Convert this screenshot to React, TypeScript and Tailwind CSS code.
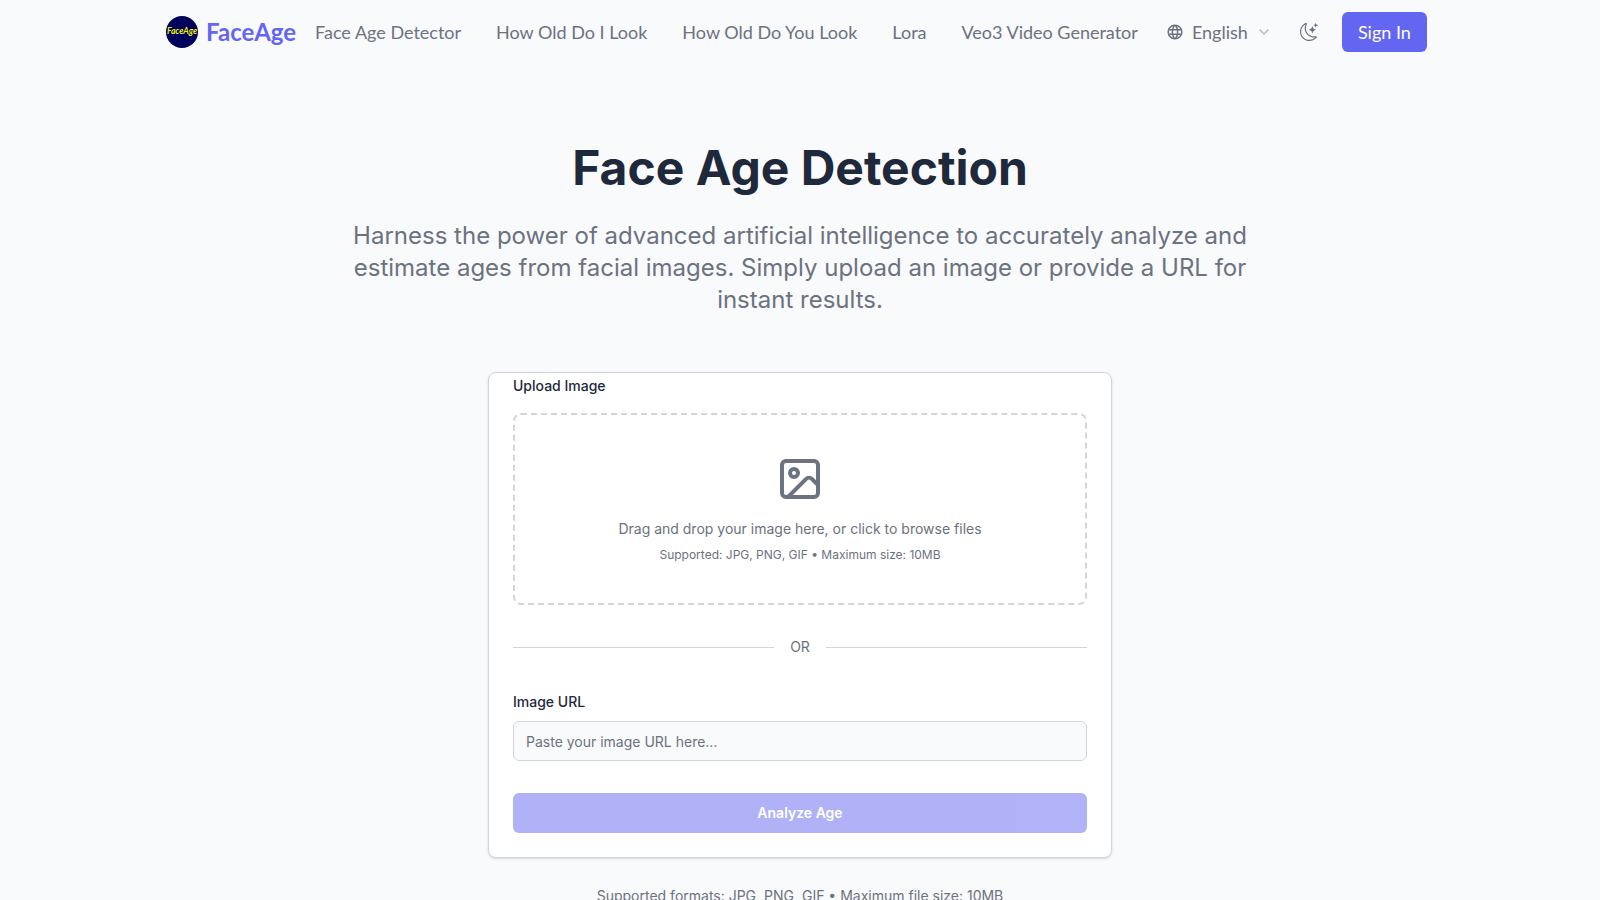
import { useState } from "react";
import { ChevronDown, Image } from "lucide-react";
import { BsMoonStars } from "react-icons/bs";
import { MdLanguage } from "react-icons/md";

interface NavItem {
  title: string;
  url: string;
}

const navItems: NavItem[] = [
  { title: "Face Age Detector", url: "#detector" },
  { title: "How Old Do I Look", url: "#how-old-do-i-look" },
  { title: "How Old Do You Look", url: "#how-old-do-you-look" },
  { title: "Lora", url: "#lora" },
  { title: "Veo3 Video Generator", url: "#veo3" },
];

function Logo() {
  return (
    <svg viewBox="0 0 32 32" className="size-8 shrink-0" aria-hidden="true">
      <circle cx="16" cy="16" r="16" fill="#00005a" />
      <text
        x="16"
        y="18"
        textAnchor="middle"
        fontFamily="Lato, sans-serif"
        fontSize="8.5"
        fontWeight="700"
        fontStyle="italic"
        fill="#f5f500"
      >
        FaceAge
      </text>
    </svg>
  );
}

function Header() {
  return (
    <header className="font-[Lato,sans-serif] text-[#6b7280]">
      <div className="mx-auto flex h-16 max-w-[1268px] items-center">
        <a href="#home" className="flex items-center gap-2">
          <Logo />
          <span className="text-2xl font-bold text-[#6366f1]">FaceAge</span>
        </a>
        <nav className="ml-[19px] flex items-center gap-[35px] whitespace-nowrap text-lg">
          {navItems.map((item) => (
            <a key={item.url} href={item.url} className="hover:text-[#6366f1]">
              {item.title}
            </a>
          ))}
        </nav>
        <div className="ml-7 flex items-center">
          <div className="relative flex items-center gap-2 text-lg">
            <MdLanguage className="size-[18px]" />
            <select aria-label="Language" defaultValue="en" className="appearance-none bg-transparent pr-6">
              <option value="en">English</option>
            </select>
            <ChevronDown className="pointer-events-none absolute right-0 size-4 opacity-50" />
          </div>
          <button type="button" aria-label="Toggle theme" className="ml-7">
            <BsMoonStars className="size-[18px]" />
          </button>
          <button
            type="button"
            className="ml-6 h-10 whitespace-nowrap rounded-md bg-[#6366f1] px-4 text-lg text-white"
          >
            Sign In
          </button>
        </div>
      </div>
    </header>
  );
}

function UploadCard() {
  const [url, setUrl] = useState("");

  return (
    <form className="rounded-lg border border-[#d1d5db] bg-white px-6 pb-6 text-sm shadow-sm">
      <div className="text-base">
        <label htmlFor="file" className="text-sm font-medium">
          Upload Image
        </label>
      </div>
      <label
        htmlFor="file"
        className="mt-4 flex h-48 cursor-pointer flex-col items-center justify-center rounded-lg border-2 border-dashed border-gray-300 text-[#6b7280]"
      >
        <Image className="size-12" />
        <span className="mt-4">Drag and drop your image here, or click to browse files</span>
        <span className="mt-2 text-xs">Supported: JPG, PNG, GIF • Maximum size: 10MB</span>
        <input id="file" type="file" accept="image/*" className="sr-only" />
      </label>

      <div className="my-8 flex items-center gap-4 text-[#6b7280]">
        <div className="h-px flex-1 bg-[#d1d5db]" />
        <span>OR</span>
        <div className="h-px flex-1 bg-[#d1d5db]" />
      </div>

      <div className="text-base">
        <label htmlFor="url" className="text-sm font-medium">
          Image URL
        </label>
      </div>
      <input
        id="url"
        type="url"
        value={url}
        onChange={(e) => setUrl(e.target.value)}
        placeholder="Paste your image URL here..."
        className="mt-2 block h-10 w-full rounded-md border border-[#d1d5db] bg-[#f9fafb] px-3 placeholder:text-[#6b7280]"
      />

      <button
        type="submit"
        disabled={!url}
        className="mt-8 h-10 w-full rounded-md bg-[#6366f1] font-semibold text-white disabled:opacity-50"
      >
        Analyze Age
      </button>
    </form>
  );
}

export default function App() {
  return (
    <div className="min-h-screen bg-[#f9fafb] font-[Inter,sans-serif] text-[#1e293b]">
      <Header />
      <main className="pb-16 pt-20">
        <div className="mx-auto max-w-4xl text-center">
          <h1 className="text-5xl font-bold">Face Age Detection</h1>
          <p className="mt-7 text-2xl text-[#6b7280]">
            Harness the power of advanced artificial intelligence to accurately analyze and estimate ages from facial
            images. Simply upload an image or provide a URL for instant results.
          </p>
        </div>
        <div className="mx-auto mt-14 max-w-2xl px-6">
          <UploadCard />
          <p className="mt-7 text-center text-sm text-[#6b7280]">
            Supported formats: JPG, PNG, GIF • Maximum file size: 10MB
          </p>
        </div>
      </main>
    </div>
  );
}
